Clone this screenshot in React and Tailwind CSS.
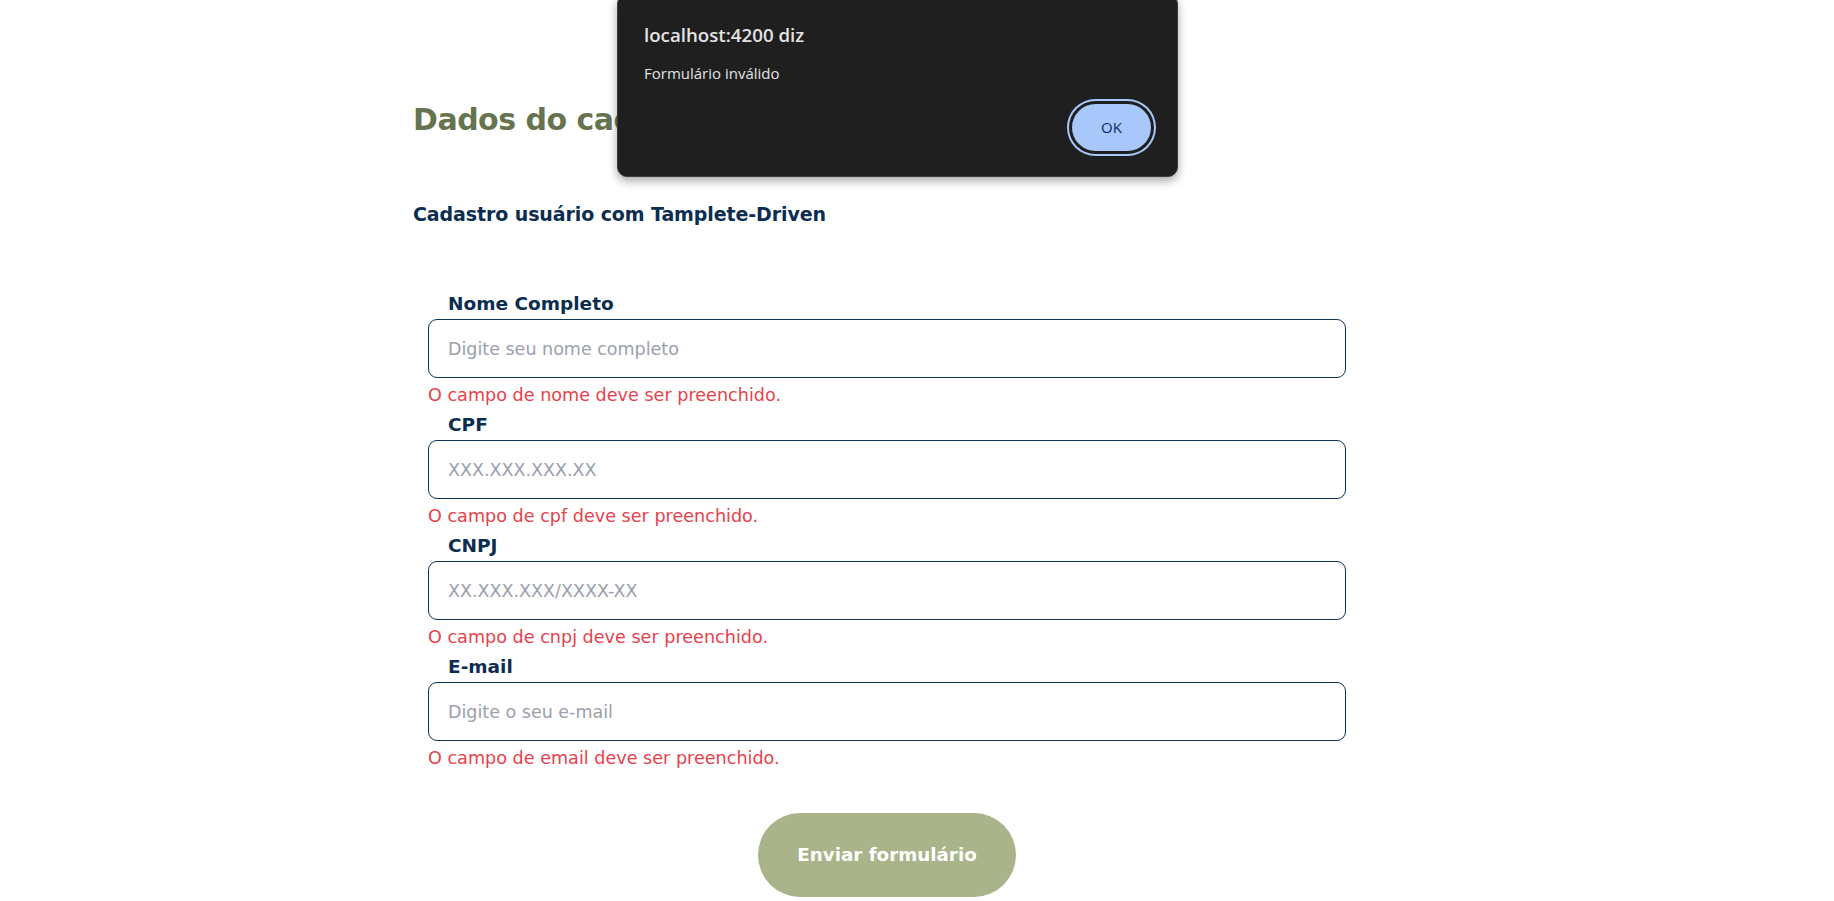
export default function App() {
  const fields = [
    { label: "Nome Completo", ph: "Digite seu nome completo", err: "O campo de nome deve ser preenchido." },
    { label: "CPF", ph: "XXX.XXX.XXX.XX", err: "O campo de cpf deve ser preenchido." },
    { label: "CNPJ", ph: "XX.XXX.XXX/XXXX-XX", err: "O campo de cnpj deve ser preenchido." },
    { label: "E-mail", ph: "Digite o seu e-mail", err: "O campo de email deve ser preenchido." },
  ];
  return (
    <div className="relative min-h-[901px] overflow-hidden bg-white font-['DejaVu_Sans',sans-serif]">
      <div className="mx-auto w-[1008px] pt-[96px]">
        <h1 className="text-[30px] font-bold leading-[48px] tracking-[-0.5px] text-[#65744f]">Dados do cadastro</h1>
        <h3 className="mt-[56px] text-[19px] font-bold leading-[28px] tracking-[-0.1px] text-[#0b2d4f]">
          Cadastro usuário com Tamplete-Driven
        </h3>
        <form className="mt-[61px] w-[948px] px-[15px]" onSubmit={(e) => e.preventDefault()}>
          <div className="flex flex-col">
            {fields.map((f) => (
              <div key={f.label} className="flex flex-col">
                <label className="pl-[20px] text-[18.5px] font-bold leading-[30px] text-[#0b2d4f]">{f.label}</label>
                <input
                  placeholder={f.ph}
                  className="h-[59px] w-full rounded-[9px] border border-[#0b3356] bg-white pl-[19px] text-[17.5px] text-[#333] outline-none placeholder:text-[#9aa0ac]"
                />
                <span className="mt-[2px] text-[17.6px] leading-[30px] text-[#e8414b]">{f.err}</span>
              </div>
            ))}
          </div>
          <div className="mt-[40px] flex justify-center">
            <button className="h-[84px] w-[258px] rounded-full bg-[#a9b48a] text-[18.3px] font-bold text-white">
              Enviar formulário
            </button>
          </div>
        </form>
      </div>

      <div className="absolute left-[617px] top-[-6px] flex h-[183px] w-[561px] flex-col rounded-[10px] border border-[#3d3d3d] bg-[#1f1f1f] px-[26px] pb-[25px] pt-[28px] font-['Open_Sans',sans-serif] shadow-[0_4px_10px_rgba(0,0,0,0.35)]">
        <div className="text-[18.7px] font-semibold leading-[24px] text-[#e3e3e3]">localhost:4200 diz</div>
        <div className="mt-[16px] text-[15px] leading-[20px] text-[#e3e3e3]">Formulário inválido</div>
        <div className="mt-auto flex justify-end">
          <button className="h-[47px] w-[79px] rounded-full bg-[#a8c7fa] text-[15px] text-[#062e6f] shadow-[0_0_0_3px_#1f1f1f,0_0_0_5px_#a8c7fa]">
            OK
          </button>
        </div>
      </div>
    </div>
  );
}
